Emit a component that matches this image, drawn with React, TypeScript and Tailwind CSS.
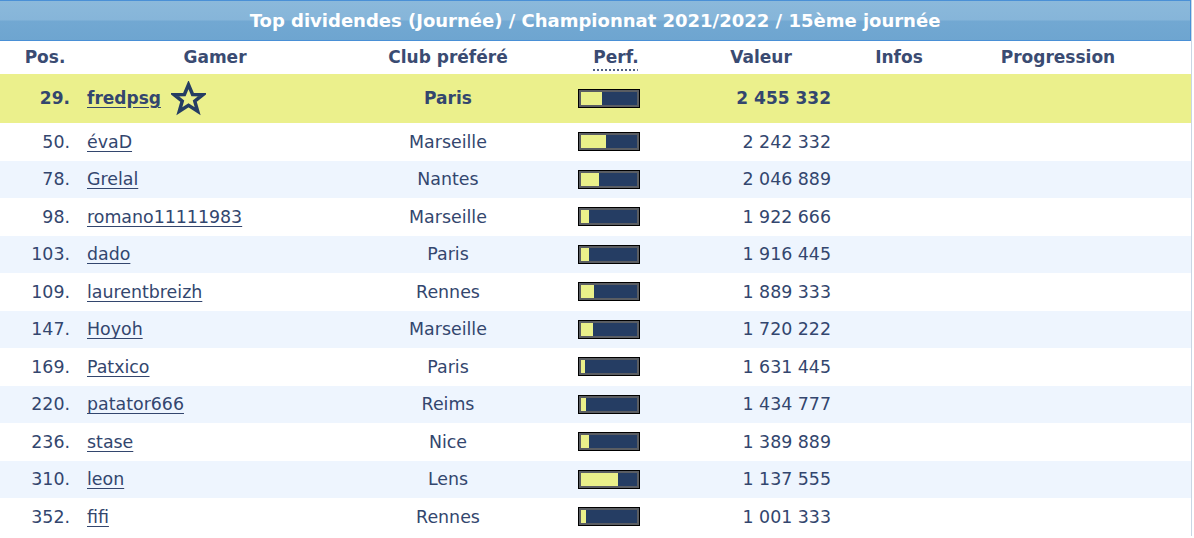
import React from "react";

type Ligne = {
  pos: number;
  gamer: string;
  club: string;
  perf: number;
  valeur: string;
  moi?: boolean;
};

const lignes: Ligne[] = [
  { pos: 29, gamer: "fredpsg", club: "Paris", perf: 21, valeur: "2 455 332", moi: true },
  { pos: 50, gamer: "évaD", club: "Marseille", perf: 25, valeur: "2 242 332" },
  { pos: 78, gamer: "Grelal", club: "Nantes", perf: 18, valeur: "2 046 889" },
  { pos: 98, gamer: "romano11111983", club: "Marseille", perf: 8, valeur: "1 922 666" },
  { pos: 103, gamer: "dado", club: "Paris", perf: 8, valeur: "1 916 445" },
  { pos: 109, gamer: "laurentbreizh", club: "Rennes", perf: 13, valeur: "1 889 333" },
  { pos: 147, gamer: "Hoyoh", club: "Marseille", perf: 12, valeur: "1 720 222" },
  { pos: 169, gamer: "Patxico", club: "Paris", perf: 4, valeur: "1 631 445" },
  { pos: 220, gamer: "patator666", club: "Reims", perf: 5, valeur: "1 434 777" },
  { pos: 236, gamer: "stase", club: "Nice", perf: 8, valeur: "1 389 889" },
  { pos: 310, gamer: "leon", club: "Lens", perf: 37, valeur: "1 137 555" },
  { pos: 352, gamer: "fifi", club: "Rennes", perf: 5, valeur: "1 001 333" },
];

const cols = "grid grid-cols-[80px_270px_196px_126px_178px_98px_220px_1fr]";

function Barre({ fill }: { fill: number }) {
  // fill en pixels sur la largeur intérieure
  return (
    <div className="w-[62px] h-[19px] border border-black bg-[#5a5d62] p-[2px]">
      <div className="flex h-full w-full bg-[#253d63]">
        <div className="h-full bg-[#eaf08a]" style={{ width: fill }} />
      </div>
    </div>
  );
}

function Etoile() {
  return (
    <svg width="35" height="35" viewBox="0 0 24 24" fill="none" stroke="#253d63" strokeWidth="2.4" strokeLinejoin="miter">
      <polygon points="12,2.5 14.8,9.2 21.8,9.4 16.3,13.8 18.3,20.8 12,16.7 5.7,20.8 7.7,13.8 2.2,9.4 9.2,9.2" />
    </svg>
  );
}

export default function App() {
  return (
    <div className="w-[1194px] h-[538px] bg-white overflow-hidden text-[#33466e] font-['DejaVu_Sans',Verdana,sans-serif]">
      <div className="w-[1192px] border-r border-[#c9d5e4]">
        <div className="h-[41px] border border-l-0 border-[#4a90d6] bg-[linear-gradient(to_bottom,#8bb9db_0%,#86b5d9_48%,#72a8d2_52%,#6ea5d0_100%)] flex items-center justify-center">
          <span className="text-white font-bold text-[18px]">
            Top dividendes (Journée) / Championnat 2021/2022 / 15ème journée
          </span>
        </div>

        <div className={`${cols} h-[33px] items-center font-bold text-[17px] text-[#3a4b72]`}>
          <div className="text-center pl-[10px] pt-[1px]">Pos.</div>
          <div className="text-center pt-[1px]">Gamer</div>
          <div className="text-center pt-[1px]">Club préféré</div>
          <div className="text-center pl-[14px] pt-[1px]">
            <span className="underline decoration-dotted decoration-[#33466e] underline-offset-[6px]">Perf.</span>
          </div>
          <div className="text-center pt-[1px]">Valeur</div>
          <div className="text-center pt-[1px]">Infos</div>
          <div className="text-center pt-[1px]">Progression</div>
          <div />
        </div>

        {lignes.map((l, i) => (
          <div
            key={l.pos}
            className={`${cols} items-center ${
              l.moi
                ? "h-[49px] bg-[#ebf08c] font-bold text-[17px]"
                : i % 2 === 0
                ? "h-[37.5px] bg-[#eef5fe] text-[17.4px]"
                : "h-[37.5px] bg-white text-[17.4px]"
            }`}
          >
            <div className="text-right pr-[10px]">{l.pos}.</div>
            <div className="flex items-center gap-[10px] pl-[7px]">
              <span className="underline underline-offset-[3px]">{l.gamer}</span>
              {l.moi && <Etoile />}
            </div>
            <div className="text-center">{l.club}</div>
            <div className="flex justify-center">
              <Barre fill={l.perf} />
            </div>
            <div className="text-right pr-[19px]">{l.valeur}</div>
            <div />
            <div />
            <div />
          </div>
        ))}
      </div>
    </div>
  );
}
